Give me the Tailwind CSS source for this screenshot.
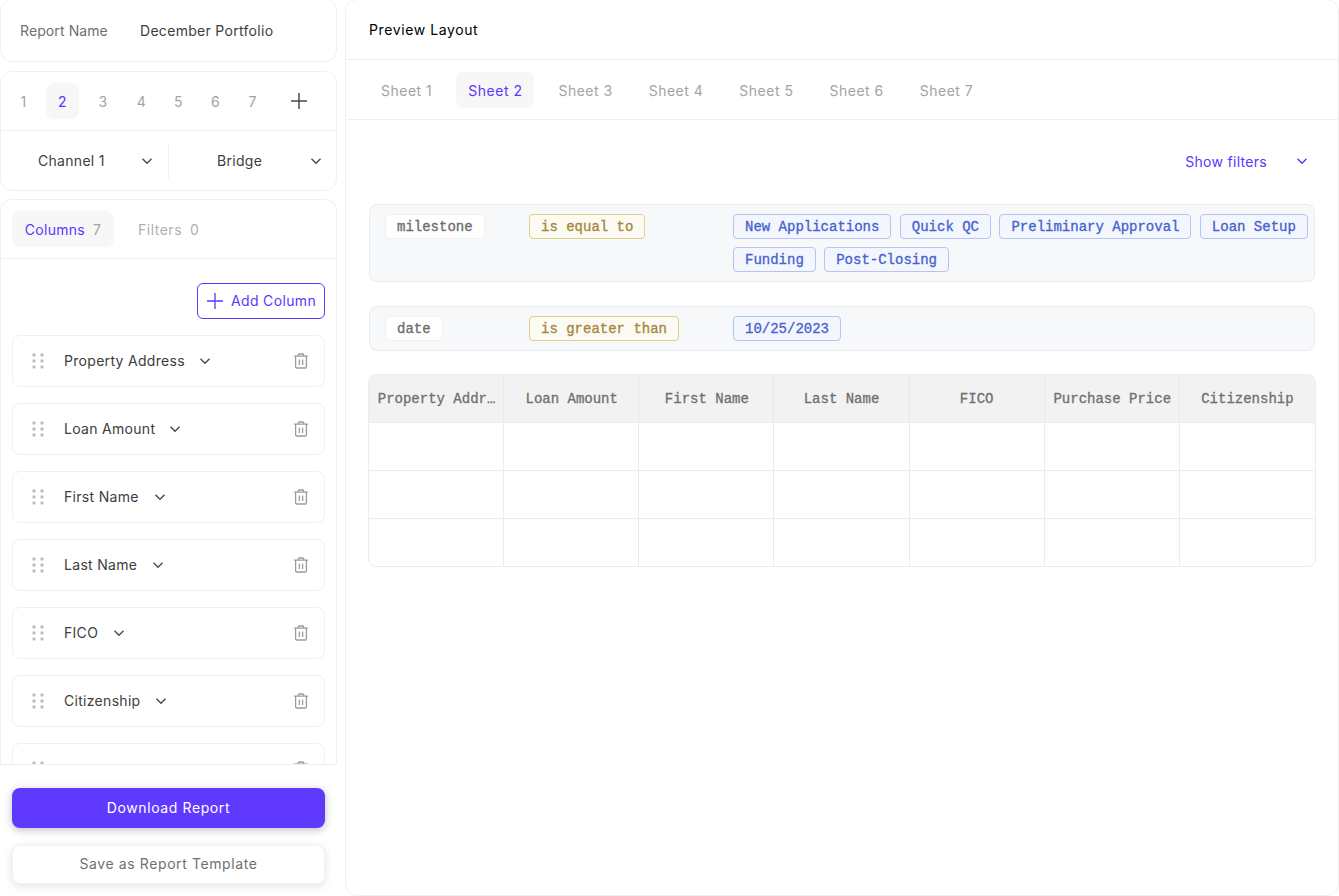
<!DOCTYPE html>
<html lang="en">
<head>
  <meta charset="UTF-8" />
  <title>Report Builder</title>
  <script src="https://cdn.jsdelivr.net/npm/@tailwindcss/browser@4"></script>
</head>
<body class="bg-white h-screen overflow-hidden font-['Inter',sans-serif] text-[14px] tracking-[0.3px] text-[#3d3d3d]">
  <!-- shared icons -->
  <svg class="hidden">
    <symbol id="chev" viewBox="0 0 12 12"><path d="M1.5 3.8 6 8.2l4.5-4.4" fill="none" stroke="currentColor" stroke-width="1.4"/></symbol>
    <symbol id="grip" viewBox="0 0 12 16">
      <g fill="#bdbdbd"><circle cx="2" cy="2" r="1.7"/><circle cx="10" cy="2" r="1.7"/><circle cx="2" cy="8" r="1.7"/><circle cx="10" cy="8" r="1.7"/><circle cx="2" cy="14" r="1.7"/><circle cx="10" cy="14" r="1.7"/></g>
    </symbol>
    <symbol id="trash" viewBox="0 0 16 16">
      <path d="M1 3.2h14M5.3 3V1.9c0-.5.4-.9.9-.9h3.6c.5 0 .9.4.9.9V3M2.6 3.2v10.6c0 .7.5 1.2 1.2 1.2h8.4c.7 0 1.2-.5 1.2-1.2V3.2M6.4 6.5v5.5M9.6 6.5v5.5" fill="none" stroke="#9c9c9c" stroke-width="1.3"/>
    </symbol>
  </svg>

  <div class="flex h-full gap-2">
    <!-- Left column -->
    <aside class="w-[337px] shrink-0 flex flex-col gap-2 h-full overflow-hidden">
      <div class="h-[63px] shrink-0 border border-[#f0f0f0] rounded-b-xl rounded-t-xl flex items-center pl-[19px] -mt-px">
        <span class="w-[120px] text-[#6f6f6f] tracking-[0.1px]">Report Name</span>
        <span>December Portfolio</span>
      </div>

      <div class="shrink-0 border border-[#f0f0f0] rounded-xl h-[120px] mt-px">
        <div class="h-[59px] border-b border-[#f0f0f0] flex items-center text-[#a3a3a3] relative">
          <span class="w-[45px] text-center">1</span>
          <span class="w-[33px] h-[36px] rounded-lg bg-[#f7f7f7] text-[#5b36ff] flex items-center justify-center">2</span>
          <span class="w-[48px] text-center">3</span>
          <span class="w-[29px] text-center">4</span>
          <span class="w-[45px] text-center">5</span>
          <span class="w-[29px] text-center">6</span>
          <span class="w-[45px] text-center">7</span>
          <svg class="w-4 h-4 ml-[16px]" viewBox="0 0 16 16"><path d="M8 0v16M0 8h16" stroke="#4a4a4a" stroke-width="1.5"/></svg>
        </div>
        <div class="h-[59px] flex items-center">
          <div class="w-[168px] h-9 border-r border-[#f3f3f3] flex items-center pl-[37px] pr-[15px] justify-between">
            <span>Channel 1</span>
            <svg class="w-3 h-3 text-[#4a4a4a]"><use href="#chev"/></svg>
          </div>
          <div class="flex-1 flex items-center pl-[48px] pr-[14px] justify-between">
            <span>Bridge</span>
            <svg class="w-3 h-3 text-[#4a4a4a]"><use href="#chev"/></svg>
          </div>
        </div>
      </div>

      <div class="flex-1 min-h-0 overflow-hidden border border-[#f0f0f0] border-b-0 rounded-t-xl">
        <div class="h-[59px] border-b border-[#f0f0f0] flex items-center pl-[11px] gap-3">
          <div class="h-9 w-[102px] rounded-lg bg-[#f7f7f7] flex items-center justify-center gap-2">
            <span class="text-[#5b36ff]">Columns</span><span class="text-[#a3a3a3]">7</span>
          </div>
          <div class="flex items-center gap-2 text-[#b0b0b0] ml-3">
            <span class="tracking-[0.5px]">Filters</span><span>0</span>
          </div>
        </div>
        <div class="px-[11px] pt-6">
          <div class="flex justify-end mb-4">
            <button class="h-9 w-[128px] pb-[2px] pl-px rounded-md border-[1.5px] border-[#5b36ff] text-[#5b36ff] flex items-center justify-center gap-2 tracking-[0.35px]">
              <svg class="w-4 h-4 mt-[2px]" viewBox="0 0 16 16"><path d="M8 0v16M0 8h16" stroke="#5b36ff" stroke-width="1.3"/></svg>
              Add Column
            </button>
          </div>
          <div class="flex flex-col gap-4">
            <div class="h-[52px] border border-[#f0f0f0] rounded-lg flex items-center pl-[19px] pr-[15px]">
              <svg class="w-3 h-4 mr-5"><use href="#grip"/></svg>
              <span class="pb-px">Property Address</span>
              <svg class="w-3 h-3 ml-[14px] text-[#4a4a4a]"><use href="#chev"/></svg>
              <svg class="w-4 h-4 ml-auto"><use href="#trash"/></svg>
            </div>
            <div class="h-[52px] border border-[#f0f0f0] rounded-lg flex items-center pl-[19px] pr-[15px]">
              <svg class="w-3 h-4 mr-5"><use href="#grip"/></svg>
              <span class="pb-px">Loan Amount</span>
              <svg class="w-3 h-3 ml-[14px] text-[#4a4a4a]"><use href="#chev"/></svg>
              <svg class="w-4 h-4 ml-auto"><use href="#trash"/></svg>
            </div>
            <div class="h-[52px] border border-[#f0f0f0] rounded-lg flex items-center pl-[19px] pr-[15px]">
              <svg class="w-3 h-4 mr-5"><use href="#grip"/></svg>
              <span class="pb-px">First Name</span>
              <svg class="w-3 h-3 ml-[15px] text-[#4a4a4a]"><use href="#chev"/></svg>
              <svg class="w-4 h-4 ml-auto"><use href="#trash"/></svg>
            </div>
            <div class="h-[52px] border border-[#f0f0f0] rounded-lg flex items-center pl-[19px] pr-[15px]">
              <svg class="w-3 h-4 mr-5"><use href="#grip"/></svg>
              <span class="pb-px">Last Name</span>
              <svg class="w-3 h-3 ml-[15px] text-[#4a4a4a]"><use href="#chev"/></svg>
              <svg class="w-4 h-4 ml-auto"><use href="#trash"/></svg>
            </div>
            <div class="h-[52px] border border-[#f0f0f0] rounded-lg flex items-center pl-[19px] pr-[15px]">
              <svg class="w-3 h-4 mr-5"><use href="#grip"/></svg>
              <span class="pb-px">FICO</span>
              <svg class="w-3 h-3 ml-[15px] text-[#4a4a4a]"><use href="#chev"/></svg>
              <svg class="w-4 h-4 ml-auto"><use href="#trash"/></svg>
            </div>
            <div class="h-[52px] border border-[#f0f0f0] rounded-lg flex items-center pl-[19px] pr-[15px]">
              <svg class="w-3 h-4 mr-5"><use href="#grip"/></svg>
              <span class="pb-px">Citizenship</span>
              <svg class="w-3 h-3 ml-[15px] text-[#4a4a4a]"><use href="#chev"/></svg>
              <svg class="w-4 h-4 ml-auto"><use href="#trash"/></svg>
            </div>
            <div class="h-[52px] border border-[#f0f0f0] rounded-lg flex items-center pl-[19px] pr-[15px]">
              <svg class="w-3 h-4 mr-5"><use href="#grip"/></svg>
              <svg class="w-4 h-4 ml-auto"><use href="#trash"/></svg>
            </div>
          </div>
        </div>
      </div>

      <!-- Footer actions -->
      <div class="-mt-2 h-[132px] shrink-0 border-t border-[#f0f0f0] bg-white px-3 pt-[23px]">
        <button class="w-full h-10 pb-[2px] rounded-lg bg-[#6039ff] text-white shadow-[0_2px_8px_rgba(0,0,0,0.25)] tracking-[0.6px]">Download Report</button>
        <button class="w-full h-[39px] pb-[2px] mt-[17px] rounded-lg bg-white border border-[#f3f3f3] text-[#6f6f6f] shadow-[0_2px_8px_rgba(0,0,0,0.12)] tracking-[0.6px]">Save as Report Template</button>
      </div>
    </aside>

    <!-- Right panel -->
    <main class="flex-1 min-w-0 border border-[#f0f0f0] rounded-xl -mt-px h-[897px]">
      <div class="h-[60px] border-b border-[#f0f0f0] flex items-center pl-[23px] text-black tracking-[0.6px]">Preview Layout</div>
      <div class="h-[60px] border-b border-[#f0f0f0] flex items-center pl-[23px] gap-3 text-[#a3a3a3] tracking-[0.5px]">
        <span class="h-9 px-3 pt-px flex items-center">Sheet 1</span>
        <span class="h-9 px-3 pt-px flex items-center rounded-lg bg-[#f7f7f7] text-[#5b36ff]">Sheet 2</span>
        <span class="h-9 px-3 pt-px flex items-center">Sheet 3</span>
        <span class="h-9 px-3 pt-px flex items-center">Sheet 4</span>
        <span class="h-9 px-3 pt-px flex items-center">Sheet 5</span>
        <span class="h-9 px-3 pt-px flex items-center">Sheet 6</span>
        <span class="h-9 px-3 pt-px flex items-center">Sheet 7</span>
      </div>

      <div class="px-[23px] pt-[32px]">
        <div class="flex justify-end items-center pr-[7px] text-[#5b36ff] h-[18px]">
          <span>Show filters</span>
          <svg class="w-3 h-3 ml-[29px]"><use href="#chev"/></svg>
        </div>

        <div class="font-['Liberation_Mono',monospace] tracking-normal font-normal [-webkit-text-stroke:0.3px_currentColor]">
          <div class="mt-[34px] h-[78px] w-[946px] bg-[#f7f8f9] border border-[#e9ebef] rounded-lg flex pt-[9px] pl-[15px]">
            <div class="w-[144px] shrink-0"><span class="inline-flex h-[25px] pt-[2px] items-center px-[11px] bg-white border border-[#f2f2f2] rounded text-[#6b6b6b]">milestone</span></div>
            <div class="w-[204px] shrink-0"><span class="inline-flex h-[25px] pt-[2px] items-center px-[11px] bg-[#fbfaf3] border border-[#e3cf8a] rounded text-[#a5863a]">is equal to</span></div>
            <div class="flex flex-wrap gap-x-[8.4px] gap-y-2 content-start text-[#4561cf]">
              <span class="h-[25px] pt-[2px] flex items-center px-[11px] bg-[#f3f6fd] border border-[#b4c5f5] rounded">New Applications</span>
              <span class="h-[25px] pt-[2px] flex items-center px-[11px] bg-[#f3f6fd] border border-[#b4c5f5] rounded">Quick QC</span>
              <span class="h-[25px] pt-[2px] flex items-center px-[11px] bg-[#f3f6fd] border border-[#b4c5f5] rounded">Preliminary Approval</span>
              <span class="h-[25px] pt-[2px] flex items-center px-[11px] bg-[#f3f6fd] border border-[#b4c5f5] rounded">Loan Setup</span>
              <span class="h-[25px] pt-[2px] flex items-center px-[11px] bg-[#f3f6fd] border border-[#b4c5f5] rounded">Funding</span>
              <span class="h-[25px] pt-[2px] flex items-center px-[11px] bg-[#f3f6fd] border border-[#b4c5f5] rounded">Post-Closing</span>
            </div>
          </div>

          <div class="mt-6 h-[45px] w-[946px] bg-[#f7f8f9] border border-[#e9ebef] rounded-lg flex pt-[9px] pl-[15px]">
            <div class="w-[144px] shrink-0"><span class="inline-flex h-[25px] pt-[2px] items-center px-[11px] bg-white border border-[#f2f2f2] rounded text-[#6b6b6b]">date</span></div>
            <div class="w-[204px] shrink-0"><span class="inline-flex h-[25px] pt-[2px] items-center px-[11px] bg-[#fbfaf3] border border-[#e3cf8a] rounded text-[#a5863a]">is greater than</span></div>
            <span class="h-[25px] pt-[2px] flex items-center px-[11px] bg-[#f3f6fd] border border-[#b4c5f5] rounded text-[#4561cf]">10/25/2023</span>
          </div>

          <!-- Preview table -->
          <div class="mt-[23px] -ml-px w-[948px] border border-[#ececec] rounded-lg overflow-hidden">
            <div class="grid grid-cols-7 h-[48px] bg-[#f2f2f2] border-b border-[#ececec] text-[#6f6f6f] text-center items-center divide-x divide-[#e8e8e8]">
              <span class="h-full pt-[2px] pl-px flex items-center justify-center whitespace-nowrap">Property Addr…</span>
              <span class="h-full pt-[2px] pl-px flex items-center justify-center">Loan Amount</span>
              <span class="h-full pt-[2px] pl-px flex items-center justify-center">First Name</span>
              <span class="h-full pt-[2px] flex items-center justify-center">Last Name</span>
              <span class="h-full pt-[2px] flex items-center justify-center">FICO</span>
              <span class="h-full pt-[2px] pl-px flex items-center justify-center">Purchase Price</span>
              <span class="h-full pt-[2px] flex items-center justify-center">Citizenship</span>
            </div>
            <div class="grid grid-cols-7 h-[48px] border-b border-[#ececec] divide-x divide-[#ececec]"><i></i><i></i><i></i><i></i><i></i><i></i><i></i></div>
            <div class="grid grid-cols-7 h-[48px] border-b border-[#ececec] divide-x divide-[#ececec]"><i></i><i></i><i></i><i></i><i></i><i></i><i></i></div>
            <div class="grid grid-cols-7 h-[47px] divide-x divide-[#ececec]"><i></i><i></i><i></i><i></i><i></i><i></i><i></i></div>
          </div>
        </div>
      </div>
    </main>
  </div>
</body>
</html>
